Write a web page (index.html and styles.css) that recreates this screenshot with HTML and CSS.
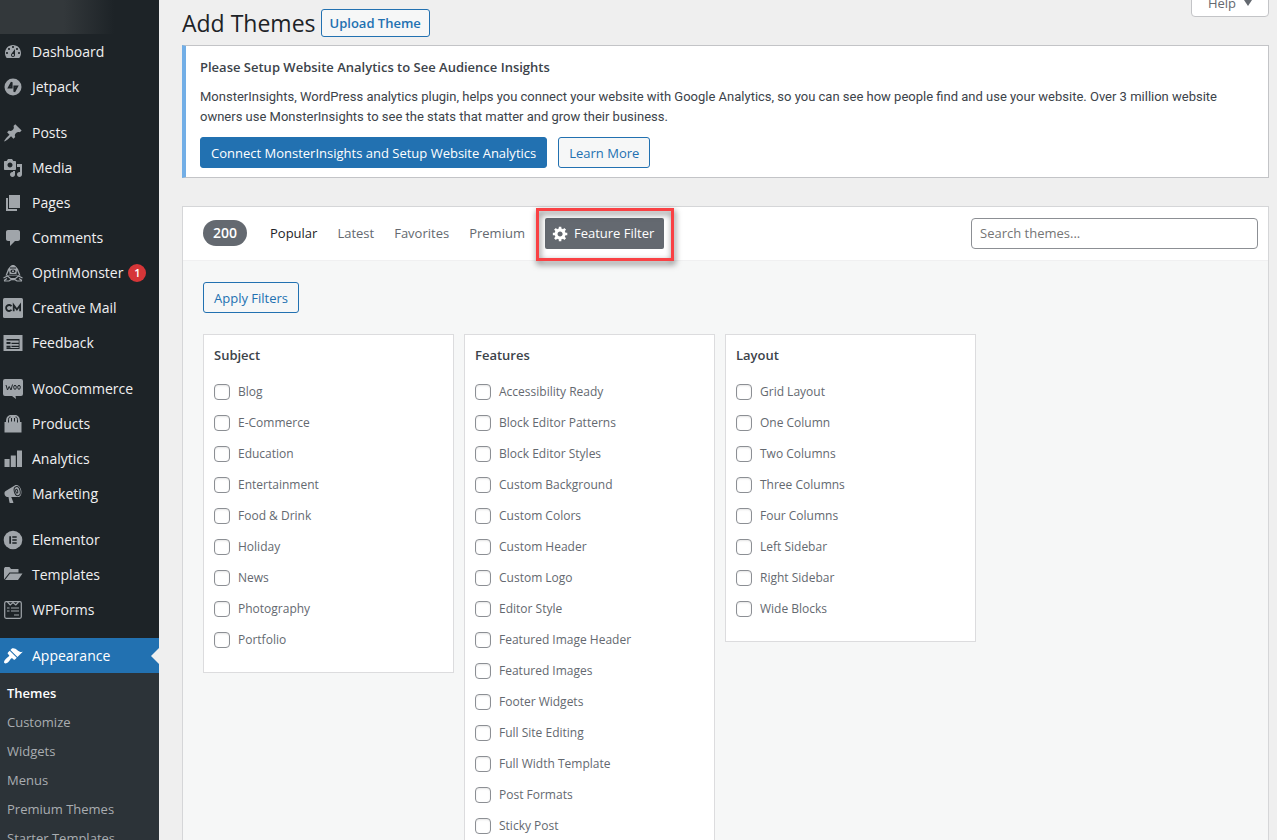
FILE: index.html
```html
<!DOCTYPE html>
<html lang="en">
<head>
<meta charset="utf-8">
<title>Add Themes</title>
<link rel="stylesheet" href="styles.css">
</head>
<body>
<div class="app">
  <nav class="sidebar" aria-label="Main menu">
    <div class="site-bar"></div>
    <ul class="menu">
      <li><a class="menu-link" href="#"><svg class="icon" viewBox="0 0 20 20"><path d="M3.76 16h12.48c1.1-1.37 1.76-3.11 1.76-5 0-4.42-3.58-8-8-8s-8 3.58-8 8c0 1.89.66 3.63 1.76 5zM10 4c.55 0 1 .45 1 1s-.45 1-1 1-1-.45-1-1 .45-1 1-1zM6 6c.55 0 1 .45 1 1s-.45 1-1 1-1-.45-1-1 .45-1 1-1zm8 0c.55 0 1 .45 1 1s-.45 1-1 1-1-.45-1-1 .45-1 1-1zm-5.37 5.55L12 7v6c0 1.1-.9 2-2 2s-2-.9-2-2c0-.57.24-1.08.63-1.45zM4 10c.55 0 1 .45 1 1s-.45 1-1 1-1-.45-1-1 .45-1 1-1zm12 0c.55 0 1 .45 1 1s-.45 1-1 1-1-.45-1-1 .45-1 1-1zm-5 3c0-.55-.45-1-1-1s-1 .45-1 1 .45 1 1 1 1-.45 1-1z"/></svg>Dashboard</a></li>
      <li><a class="menu-link" href="#"><svg class="icon" viewBox="0 0 20 20"><circle cx="10" cy="10" r="8.5"/><path class="cut-line" d="M8.700 5.200v5.300H5.800zM11.300 14.800V9.500h2.900z"/></svg>Jetpack</a></li>
      <li class="group"><a class="menu-link" href="#"><svg class="icon" viewBox="0 0 20 20"><path d="M10.44 3.02l1.82-1.82 6.36 6.35-1.83 1.82c-1.05-.68-2.48-.57-3.41.36l-.75.75c-.92.93-1.04 2.35-.35 3.41l-1.83 1.82-2.41-2.41-2.8 2.79c-.42.42-3.38 2.71-3.8 2.29s1.86-3.39 2.28-3.81l2.79-2.79L4.1 9.36l1.83-1.82c1.05.69 2.48.57 3.4-.36l.75-.75c.93-.92 1.05-2.35.36-3.41z"/></svg>Posts</a></li>
      <li><a class="menu-link" href="#"><svg class="icon" viewBox="0 0 20 20"><path d="M13 11V4c0-.55-.45-1-1-1h-1.67L9 1H5L3.67 3H2c-.55 0-1 .45-1 1v7c0 .55.45 1 1 1h10c.55 0 1-.45 1-1zM7 4.5c1.38 0 2.5 1.12 2.5 2.5S8.38 9.5 7 9.5 4.5 8.38 4.5 7 5.62 4.5 7 4.5zM14 6h5v10.5c0 1.38-1.12 2.5-2.5 2.5S14 17.88 14 16.5s1.12-2.5 2.5-2.5c.17 0 .34.02.5.05V9h-3V6zm-4 8.05V13h2v3.5c0 1.38-1.12 2.5-2.5 2.5S7 17.88 7 16.5 8.12 14 9.5 14c.17 0 .34.02.5.05z"/></svg>Media</a></li>
      <li><a class="menu-link" href="#"><svg class="icon" viewBox="0 0 20 20"><path d="M6 15V2h11v13H6zm-1 1h9v2H3V5h2v11z"/></svg>Pages</a></li>
      <li><a class="menu-link" href="#"><svg class="icon" viewBox="0 0 20 20"><path d="M5 2h10c1.100 0 2 .9 2 2v7c0 1.100-.9 2-2 2h-3l-5 5v-5H5c-1.100 0-2-.9-2-2V4c0-1.100.9-2 2-2z"/></svg>Comments</a></li>
      <li><a class="menu-link" href="#"><svg class="icon" viewBox="0 0 20 20"><path d="M7.500 3C8.500 1.500 11.500 1.500 12.500 3L15 6l2.500 6.500h-15L5 6z"/><path class="cut" d="M7 4.500h6v1H7zM4 12l2-4.500.8 4.500zM16 12l-2-4.500-.8 4.500z"/><ellipse class="cut" cx="10" cy="8.200" rx="2.600" ry="1.700"/><circle cx="10" cy="8.200" r="1"/><path class="cut" d="M7 11h6v.8H7z"/><path class="line" d="M.5 15l4-2 3 2.500h5l3-2.500 4 2M1 18h5l2-1.300h4l2 1.300h5M4 15.500l-3 2M16 15.500l3 2"/></svg>OptinMonster<span class="badge">1</span></a></li>
      <li><a class="menu-link" href="#"><svg class="icon" viewBox="0 0 20 20"><rect width="20" height="20" rx="1.500"/><path class="cut-line" d="M8.500 8.200A3 3 0 1 0 8.500 11.800M10.700 13.200V7.200L13.900 11.500 17.100 7.200V13.200"/></svg>Creative Mail</a></li>
      <li><a class="menu-link" href="#"><svg class="icon" viewBox="0 0 20 20"><path d="M.5 2h19v16H.5z"/><path class="cut" d="M3.500 6h13v1.500h-13zM3.500 9h4v2h-4zM8.500 9.800h8v1.200h-8zM3.500 12.800h4v2h-4zM8.500 12.800h8V14h-8zM3.500 15h13v1h-13zM15.700 6h.8v10h-.8z"/></svg>Feedback</a></li>
      <li class="group"><a class="menu-link" href="#"><svg class="icon" viewBox="0 0 20 20"><path d="M2 0h16a2 2 0 0 1 2 2v13a2 2 0 0 1-2 2h-5.500l.5 3-4-3H2a2 2 0 0 1-2-2V2a2 2 0 0 1 2-2z"/><path class="cut-line thin" d="M3 6l1.500 5L6.200 7.500 8 11l1.500-5.500"/><ellipse class="cut-line thin" cx="12" cy="8.300" rx="1.300" ry="2"/><ellipse class="cut-line thin" cx="16" cy="8.300" rx="1.300" ry="2"/></svg>WooCommerce</a></li>
      <li><a class="menu-link" href="#"><svg class="icon" viewBox="0 0 20 20"><path d="M1.500 8h17v10.500h-17zM3 8C3 3 5 1 8 1h4c3 0 5 2 5 7z"/><path class="cut-line thin" d="M5.500 8.500V5.500C5.500 4 6.200 3 7.500 3M14.500 8.500V5.500C14.500 4 13.800 3 12.500 3M8.500 7.500V4M11.500 7.500V4"/></svg>Products</a></li>
      <li><a class="menu-link" href="#"><svg class="icon" viewBox="0 0 20 20"><path d="M19 18V1.500h-5V18zM12.800 18V6.500h-5V18zM6.600 18v-8H1.500v8z"/></svg>Analytics</a></li>
      <li><a class="menu-link" href="#"><svg class="icon" viewBox="0 0 20 20"><path fill-rule="evenodd" d="M18.150 5.940c.46 1.620.38 3.220-.02 4.480-.42 1.280-1.260 2.180-2.300 2.480-.16.060-.26.060-.4.060-.06.020-.12.020-.18.020-.06.020-.14.020-.22.020h-6.800l2.220 5.500c.02.140-.06.260-.14.340-.08.100-.24.160-.34.160H6.950c-.1 0-.26-.06-.34-.16-.08-.08-.16-.2-.14-.34l-1-5.500H4.250l-.02-.02c-.5.060-1.080-.18-1.540-.62s-.88-1.080-1.060-1.880c-.24-.8-.2-1.560-.02-2.200.18-.62.580-1.080 1.060-1.300l.02-.02 9-5.400c.1-.06.180-.1.240-.16.060-.04.140-.08.240-.12.160-.08.280-.12.500-.18 1.040-.3 2.240.1 3.220.980s1.840 2.240 2.260 3.860z"/><ellipse class="cut-line thin" cx="14.200" cy="7.100" rx="2.900" ry="4.600" transform="rotate(-15 14.200 7.100)"/><ellipse class="cut-line thin" cx="13.700" cy="7.200" rx="1" ry="2" transform="rotate(-15 13.700 7.200)"/></svg>Marketing</a></li>
      <li class="group"><a class="menu-link" href="#"><svg class="icon" viewBox="0 0 20 20"><circle cx="10" cy="10" r="9.300"/><path class="cut" d="M6.300 6.300H8v7.400H6.300zM9.300 6.300h4.400v1.500H9.300zM9.300 9.250h4.400v1.500H9.300zM9.300 12.200h4.400v1.500H9.300z"/></svg>Elementor</a></li>
      <li><a class="menu-link" href="#"><svg class="icon" viewBox="0 0 20 20"><path d="M1 14.500V3.500L2 2h4.500L8 4h7.500v3.500H6.500zM7 8.500h12.500L15 15H2z"/></svg>Templates</a></li>
      <li><a class="menu-link" href="#"><svg class="icon" viewBox="0 0 20 20"><rect class="line" x="1.700" y="1.700" width="16.600" height="16.600" rx="1.500"/><path class="line" d="M4.500 2l2.700 3L10 2.500 12.800 5l2.700-3M4 8h2.500M8 8h8M4 11h2.500M8 11h8M11 15h5"/></svg>WPForms</a></li>
      <li class="group"><a class="menu-link current" href="#" aria-current="true"><svg class="icon" viewBox="0 0 20 20"><path d="M14.480 11.060L7.410 3.990l1.500-1.500c.5-.56 2.300-.47 3.510.32 1.210.8 1.430 1.280 2.910 2.100 1.180.64 2.450 1.260 4.450.85zm-.71.71L6.700 4.700 4.930 6.470c-.39.39-.39 1.020 0 1.410l1.060 1.060c.39.39.39 1.030 0 1.420-.6.6-1.430 1.110-2.210 1.690-.35.260-.7.530-1.010.84C1.430 14.230.4 16.080 1.400 17.070c.99 1 2.840-.03 4.180-1.360.31-.31.580-.66.850-1.020.57-.78 1.080-1.610 1.690-2.210.39-.39 1.020-.39 1.410 0l1.060 1.060c.39.39 1.020.39 1.410 0z"/></svg>Appearance</a></li>
    </ul>
    <ul class="submenu">
      <li><a class="submenu-link selected" href="#">Themes</a></li>
      <li><a class="submenu-link" href="#">Customize</a></li>
      <li><a class="submenu-link" href="#">Widgets</a></li>
      <li><a class="submenu-link" href="#">Menus</a></li>
      <li><a class="submenu-link" href="#">Premium Themes</a></li>
      <li><a class="submenu-link" href="#">Starter Templates</a></li>
    </ul>
  </nav>

  <main class="content">
    <header class="page-header">
      <h1 class="page-title">Add Themes</h1>
      <button class="button upload" type="button">Upload Theme</button>
      <button class="help-tab" type="button">Help<span class="caret"></span></button>
    </header>

    <section class="notice">
      <h2 class="notice-title">Please Setup Website Analytics to See Audience Insights</h2>
      <p class="notice-text">MonsterInsights, WordPress analytics plugin, helps you connect your website with Google Analytics, so you can see how people find and use your website. Over 3 million website owners use MonsterInsights to see the stats that matter and grow their business.</p>
      <div class="notice-actions">
        <button class="button primary" type="button">Connect MonsterInsights and Setup Website Analytics</button>
        <button class="button" type="button">Learn More</button>
      </div>
    </section>

    <section class="browser">
      <div class="filter-bar">
        <span class="count">200</span>
        <a class="filter-link active" href="#">Popular</a>
        <a class="filter-link" href="#">Latest</a>
        <a class="filter-link" href="#">Favorites</a>
        <a class="filter-link" href="#">Premium</a>
        <div class="highlight">
          <button class="feature-button" type="button"><svg class="gear" viewBox="0 0 20 20"><path d="M18 12h-2.180c-.17.700-.44 1.350-.81 1.930l1.540 1.540-2.100 2.100-1.540-1.540c-.58.360-1.230.630-1.910.790V19H8v-2.180c-.68-.16-1.330-.43-1.910-.79l-1.540 1.540-2.120-2.120 1.540-1.540c-.36-.58-.63-1.230-.79-1.910H1V9.030h2.170c.16-.7.44-1.350.8-1.940L2.430 5.550l2.100-2.100 1.540 1.540c.58-.37 1.240-.64 1.930-.81V2h3v2.180c.68.160 1.330.430 1.910.790l1.540-1.540 2.120 2.120-1.540 1.540c.36.590.640 1.240.800 1.940H18V12zm-8.500 1.500c1.660 0 3-1.340 3-3s-1.340-3-3-3-3 1.340-3 3 1.340 3 3 3z"/></svg>Feature Filter</button>
        </div>
        <input class="search" type="search" placeholder="Search themes..." aria-label="Search themes">
      </div>

      <form class="filters">
        <button class="button" type="button">Apply Filters</button>
        <div class="groups">
          <fieldset class="group-card">
            <legend class="group-title">Subject</legend>
            <label class="option"><input type="checkbox" class="check">Blog</label>
            <label class="option"><input type="checkbox" class="check">E-Commerce</label>
            <label class="option"><input type="checkbox" class="check">Education</label>
            <label class="option"><input type="checkbox" class="check">Entertainment</label>
            <label class="option"><input type="checkbox" class="check">Food &amp; Drink</label>
            <label class="option"><input type="checkbox" class="check">Holiday</label>
            <label class="option"><input type="checkbox" class="check">News</label>
            <label class="option"><input type="checkbox" class="check">Photography</label>
            <label class="option"><input type="checkbox" class="check">Portfolio</label>
          </fieldset>
          <fieldset class="group-card">
            <legend class="group-title">Features</legend>
            <label class="option"><input type="checkbox" class="check">Accessibility Ready</label>
            <label class="option"><input type="checkbox" class="check">Block Editor Patterns</label>
            <label class="option"><input type="checkbox" class="check">Block Editor Styles</label>
            <label class="option"><input type="checkbox" class="check">Custom Background</label>
            <label class="option"><input type="checkbox" class="check">Custom Colors</label>
            <label class="option"><input type="checkbox" class="check">Custom Header</label>
            <label class="option"><input type="checkbox" class="check">Custom Logo</label>
            <label class="option"><input type="checkbox" class="check">Editor Style</label>
            <label class="option"><input type="checkbox" class="check">Featured Image Header</label>
            <label class="option"><input type="checkbox" class="check">Featured Images</label>
            <label class="option"><input type="checkbox" class="check">Footer Widgets</label>
            <label class="option"><input type="checkbox" class="check">Full Site Editing</label>
            <label class="option"><input type="checkbox" class="check">Full Width Template</label>
            <label class="option"><input type="checkbox" class="check">Post Formats</label>
            <label class="option"><input type="checkbox" class="check">Sticky Post</label>
          </fieldset>
          <fieldset class="group-card">
            <legend class="group-title">Layout</legend>
            <label class="option"><input type="checkbox" class="check">Grid Layout</label>
            <label class="option"><input type="checkbox" class="check">One Column</label>
            <label class="option"><input type="checkbox" class="check">Two Columns</label>
            <label class="option"><input type="checkbox" class="check">Three Columns</label>
            <label class="option"><input type="checkbox" class="check">Four Columns</label>
            <label class="option"><input type="checkbox" class="check">Left Sidebar</label>
            <label class="option"><input type="checkbox" class="check">Right Sidebar</label>
            <label class="option"><input type="checkbox" class="check">Wide Blocks</label>
          </fieldset>
        </div>
      </form>
    </section>
  </main>
</div>
</body>
</html>
```
FILE: styles.css
```css
* { box-sizing: border-box; }

body {
  margin: 0;
  background: #efefef;
  color: #3c434a;
  font: 13px/20px "Open Sans", "Noto Sans", sans-serif;
}

button, input { font: inherit; }
a { text-decoration: none; }
ul { list-style: none; margin: 0; padding: 0; }

.app {
  display: flex;
  height: 100vh;
  overflow: hidden;
}

/* Sidebar */
.sidebar {
  flex: 0 0 159px;
  display: flex;
  flex-direction: column;
  background: #1d2327;
}

.site-bar {
  flex: none;
  height: 34px;
  background: linear-gradient(90deg, #33383b 0, #33383b 40%, #1d2327 72%);
}

.group { margin-top: 11px; }

.menu-link {
  position: relative;
  display: flex;
  align-items: center;
  gap: 9px;
  height: 35px;
  padding-left: 3px;
  color: #f0f0f1;
  font-size: 14px;
  white-space: nowrap;
}

.icon {
  flex: none;
  width: 20px;
  height: 20px;
  fill: #a0a5aa;
}

.icon .cut { fill: #1d2327; }
.icon .line { fill: none; stroke: #a0a5aa; stroke-width: 1.2; }
.icon .cut-line { fill: none; stroke: #1d2327; stroke-width: 1.8; }
.icon .thin { stroke-width: 1; }

.badge {
  width: 18px;
  height: 18px;
  margin-left: -4px;
  border-radius: 9px;
  background: #d63638;
  color: #fff;
  font-size: 11px;
  font-weight: 600;
  line-height: 18px;
  text-align: center;
}

.current { background: #2271b1; color: #fff; }
.current .icon { fill: #fff; }
.current::after {
  content: "";
  position: absolute;
  right: 0;
  border: 8px solid transparent;
  border-right-color: #efefef;
  border-left-width: 0;
}

.submenu {
  flex: 1 0 auto;
  padding-top: 6px;
  background: #2c3338;
}

.submenu-link {
  display: block;
  padding-left: 7px;
  color: #a9adb1;
  line-height: 29px;
}

.selected { color: #fff; font-weight: 600; }

/* Content */
.content {
  flex: 1;
  min-width: 0;
  padding: 0 8px 0 23px;
}

.page-header {
  display: flex;
  align-items: center;
  height: 45px;
}

.page-title {
  margin: 0 5px 0 0;
  color: #1d2327;
  font-size: 23px;
  font-weight: 400;
  line-height: 30px;
}

.button {
  height: 31px;
  padding: 0 10px;
  border: 1px solid #2271b1;
  border-radius: 3px;
  background: #f6f7f7;
  color: #2271b1;
}

.upload { height: 28px; padding: 0 8px; font-weight: 600; }
.primary { background: #2271b1; color: #fff; }

.help-tab {
  display: flex;
  align-items: center;
  align-self: flex-start;
  gap: 8px;
  height: 28px;
  margin: -11px 0 0 auto;
  padding: 0 16px;
  border: 1px solid #c3c4c7;
  border-radius: 0 0 4px 4px;
  background: #fff;
  color: #646970;
}

.caret {
  border: 4px solid transparent;
  border-top: 6px solid #646970;
  border-bottom: 0;
}

.notice {
  padding: 11px 14px 9px;
  border: 1px solid #c3c4c7;
  border-left: 4px solid #72aee6;
  background: #fff;
}

.notice-title {
  margin: 0 0 10px;
  font-size: 13px;
  font-weight: 600;
  line-height: 20px;
}

.notice-text {
  margin: 0 0 10px;
  font-family: Roboto, "Open Sans", sans-serif;
  line-height: 20px;
}
.notice-actions { display: flex; gap: 11px; }

/* Theme browser */
.browser {
  margin-top: 28px;
  border: 1px solid #d5d6d8;
  background: #fff;
}

.filter-bar {
  display: flex;
  align-items: center;
  height: 53px;
  padding: 0 10px 1px 20px;
}

.count {
  margin-right: 23px;
  padding: 0 10px;
  border-radius: 13px;
  background: #646970;
  color: #fff;
  font-size: 14px;
  font-weight: 600;
  line-height: 26px;
}

.filter-link { margin-right: 20px; color: #646970; }
.active { color: #1d2327; }

.highlight { position: relative; }
.highlight::after {
  content: "";
  position: absolute;
  inset: -10px -10px -12px -9px;
  border: 3px solid #f94144;
  filter: drop-shadow(1px 3px 3px rgba(0, 0, 0, .6));
  pointer-events: none;
}

.feature-button {
  display: flex;
  align-items: center;
  gap: 5px;
  height: 31px;
  padding: 0 10px 0 7px;
  border: 0;
  border-radius: 2px;
  background: #646970;
  color: #fff;
}

.gear { width: 17px; height: 17px; fill: #fff; }

.search {
  width: 287px;
  height: 31px;
  margin-left: auto;
  padding: 0 8px;
  border: 1px solid #8c8f94;
  border-radius: 4px;
  background: #fff;
  color: #2c3338;
  font-size: 13px;
}
.search::placeholder { color: #757575; }

.filters {
  padding: 21px 20px;
  border-top: 1px solid #f0f0f1;
  background: #f6f7f7;
}

.groups {
  display: flex;
  align-items: flex-start;
  gap: 10px;
  margin-top: 21px;
}

.group-card {
  flex: 0 1 251px;
  margin: 0;
  padding: 10px 10px 17px;
  border: 1px solid #dcdcde;
  background: #fff;
}

.group-title {
  float: left;
  width: 100%;
  margin-bottom: 11px;
  padding: 0;
  font-weight: 600;
  line-height: 20px;
}

.option {
  clear: both;
  display: flex;
  align-items: center;
  gap: 8px;
  height: 31px;
  color: #646970;
  font-size: 12px;
}

.check {
  appearance: none;
  width: 16px;
  height: 16px;
  margin: 0;
  border: 1px solid #8c8f94;
  border-radius: 4px;
  background: #fff;
  box-shadow: inset 0 1px 2px rgba(0, 0, 0, .1);
}
```
